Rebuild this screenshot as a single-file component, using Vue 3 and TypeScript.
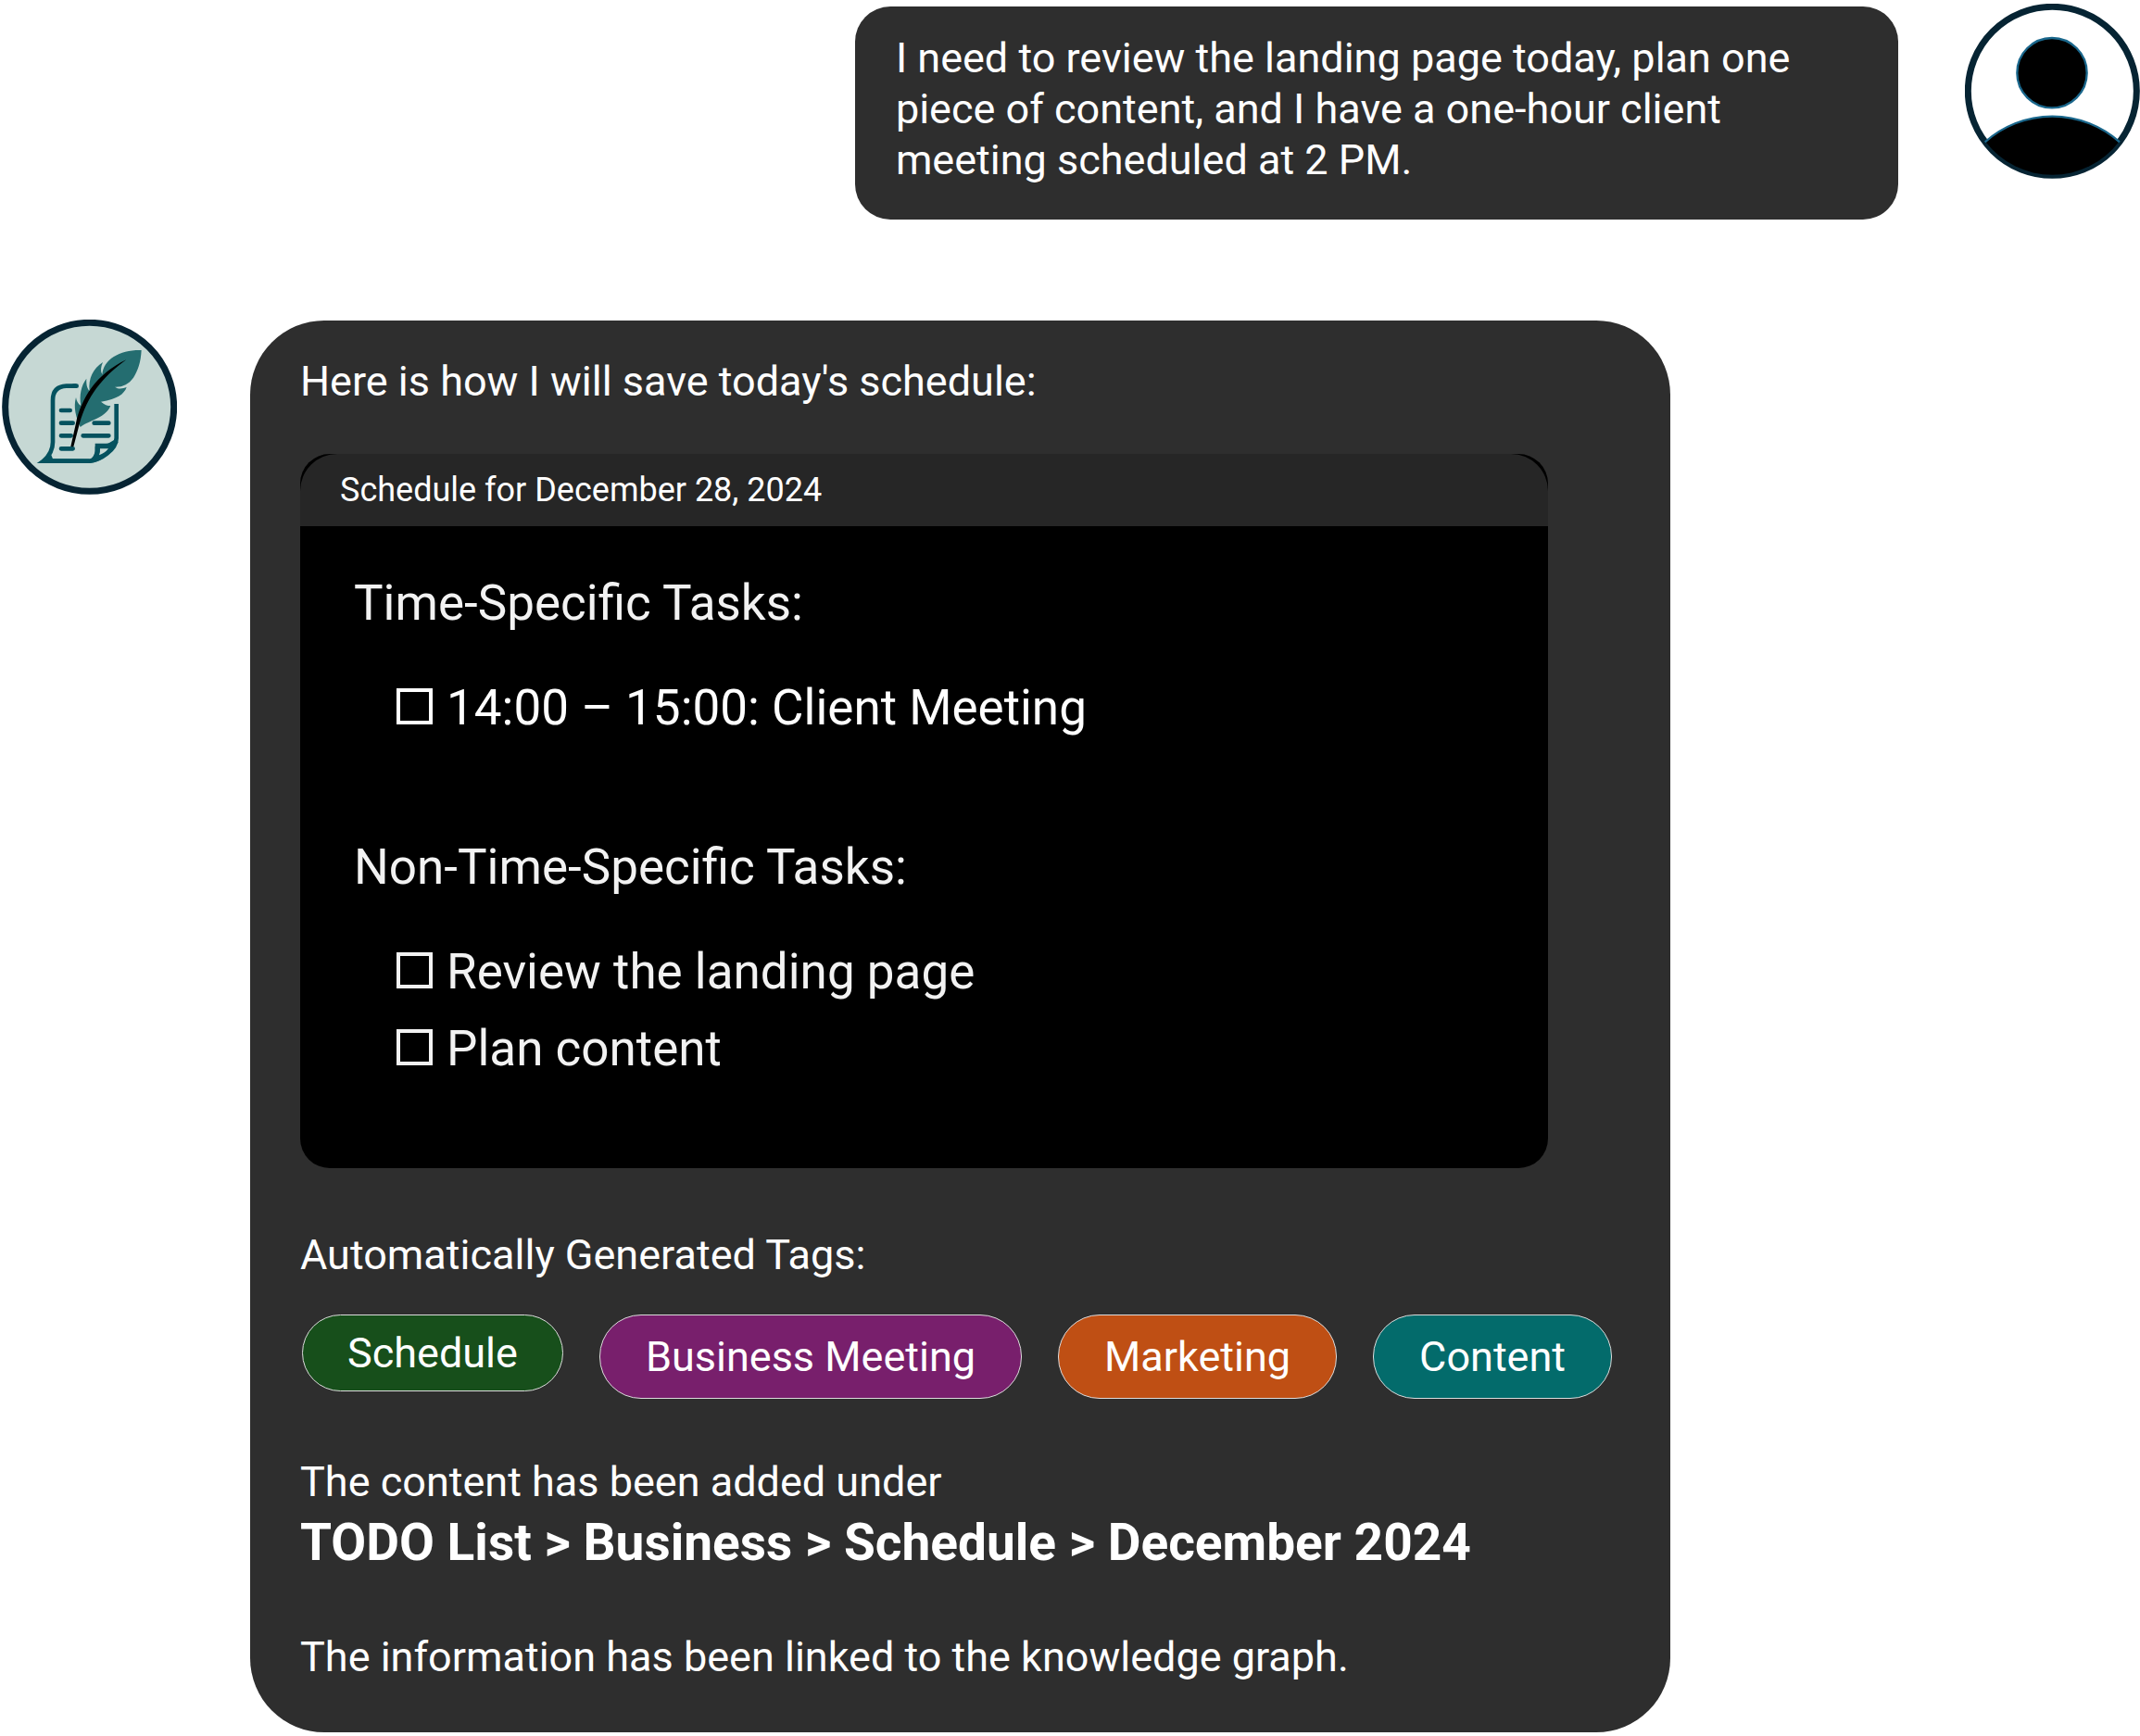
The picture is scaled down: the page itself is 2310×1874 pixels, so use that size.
<script setup lang="ts">
import { ref } from 'vue'

interface Task {
  id: string
  label: string
  done: boolean
}

interface TaskGroup {
  title: string
  timed: boolean
  tasks: Task[]
}

interface Tag {
  name: string
  tone: string
}

const request =
  'I need to review the landing page today, plan one piece of content, and I have a one-hour client meeting scheduled at 2 PM.'

const groups = ref<TaskGroup[]>([
  {
    title: 'Time-Specific Tasks:',
    timed: true,
    tasks: [{ id: 'client-meeting', label: '14:00 – 15:00: Client Meeting', done: false }],
  },
  {
    title: 'Non-Time-Specific Tasks:',
    timed: false,
    tasks: [
      { id: 'landing-page', label: 'Review the landing page', done: false },
      { id: 'plan-content', label: 'Plan content', done: false },
    ],
  },
])

const tags: Tag[] = [
  { name: 'Schedule', tone: 'green' },
  { name: 'Business Meeting', tone: 'purple' },
  { name: 'Marketing', tone: 'orange' },
  { name: 'Content', tone: 'teal' },
]

const path = ['TODO List', 'Business', 'Schedule', 'December 2024'].join(' > ')
</script>

<template>
  <main class="chat">
    <section class="row row-user">
      <p class="bubble bubble-user">{{ request }}</p>
      <svg class="avatar" viewBox="93 13 567 567" role="img" aria-label="User">
        <circle cx="376" cy="296" r="273" fill="#fff" stroke="#062433" stroke-width="21" />
        <circle cx="375" cy="237" r="113" fill="#000" stroke="#1a678c" stroke-width="7" />
        <path d="M160 460A327 327 0 0 1 592 460A271 271 0 0 1 160 460Z" fill="#000" />
        <path d="M158 461A327 327 0 0 1 594 461" fill="none" stroke="#1a678c" stroke-width="7" />
      </svg>
    </section>

    <section class="row row-bot">
      <svg class="avatar" viewBox="7 43 567 567" role="img" aria-label="Assistant">
        <circle cx="291" cy="326" r="273" fill="#c6d8d4" stroke="#062433" stroke-width="21" />
        <g fill="none" stroke="#05525f" stroke-width="14">
          <path d="M248 258H216Q172 260 172 304V440Q172 475 142 501H292C325 498 378 465 378 426V316" />
          <path d="M378 436Q368 451 344 451H316V468Q314 488 298 500" />
          <g stroke-linecap="round">
            <path d="M199 337H228M199 378H237M306 378H353M199 419H231M270 419H353M199 461H237" />
            <path d="M240 258H249" />
          </g>
        </g>
        <path d="M120 508Q146 494 162 470L172 494L290 495V508Z" fill="#05525f" />
        <path d="M316 445H350L384 425Q380 456 345 484Q320 506 290 508Q312 490 309 455Z" fill="#05525f" />
        <path d="M325 461H352Q340 476 322 482Q326 473 325 461Z" fill="#c6d8d4" />
        <path
          d="M459 142C457 180 448 208 433 231C418 252 398 262 373 261C386 270 400 266 411 262C403 284 382 300 328 309C339 319 349 322 359 322C351 342 333 357 300 370C282 378 270 384 261 391C247 360 238 326 247 295C249 306 253 316 263 322C257 288 264 256 281 234C280 251 282 265 291 274C286 234 303 201 334 181C327 197 326 210 332 221C336 170 392 140 459 142Z"
          fill="#246d70"
        />
        <path d="M410 173C328 232 284 294 259 378L239 455L230 454L247 378C263 302 310 220 410 173Z" fill="#000" />
      </svg>

      <article class="bubble bubble-bot">
        <p class="text">Here is how I will save today's schedule:</p>

        <section class="card">
          <h2 class="card-head">Schedule for December 28, 2024</h2>
          <div class="card-body">
            <section v-for="group in groups" :key="group.title" class="group">
              <h3 class="group-title">{{ group.title }}</h3>
              <ul class="tasks" :class="{ timed: group.timed }">
                <li v-for="task in group.tasks" :key="task.id" class="task">
                  <input :id="task.id" v-model="task.done" class="box" type="checkbox" />
                  <label :for="task.id">{{ task.label }}</label>
                </li>
              </ul>
            </section>
          </div>
        </section>

        <p class="text">Automatically Generated Tags:</p>
        <ul class="tags">
          <li v-for="tag in tags" :key="tag.name" class="tag" :class="tag.tone">{{ tag.name }}</li>
        </ul>

        <p class="text">The content has been added under</p>
        <p class="path">{{ path }}</p>
        <p class="text">The information has been linked to the knowledge graph.</p>
      </article>
    </section>
  </main>
</template>

<style>
body {
  margin: 0;
  background: #fff;
}
</style>

<style scoped>
.chat {
  display: flex;
  flex-direction: column;
  gap: 108px;
  padding: 4px 0;
  font-family: Roboto, "Liberation Sans", sans-serif;
  font-size: 45px;
  line-height: 55px;
  color: #fff;
}

p,
h2,
h3,
ul {
  margin: 0;
  padding: 0;
  font-weight: 400;
  list-style: none;
}

.row {
  display: flex;
  align-items: flex-start;
}

.row-user {
  justify-content: flex-end;
  gap: 72px;
}

.row-bot {
  gap: 79px;
  padding-left: 2px;
}

.avatar {
  flex: none;
  width: 189px;
  height: 189px;
}

.bubble {
  box-sizing: border-box;
  background: #2e2e2e;
}

.bubble-user {
  width: 48.75%;
  margin-top: 3px;
  padding: 28px 80px 37px 44px;
  border-radius: 38px;
}

.bubble-bot {
  width: 66.4%;
  margin-top: 1px;
  padding: 38px 54px 54px;
  border-radius: 80px;
}

.card {
  margin: 51px 78px 66px 0;
  border-radius: 32px;
  background: #000;
}

.card-head {
  padding: 0 43px;
  border-radius: 40px 40px 0 0;
  background: #262626;
  font-size: 36px;
  line-height: 78px;
}

.card-body {
  display: flex;
  flex-direction: column;
  gap: 112px;
  padding: 53px 58px 99px;
  font-size: 53px;
  line-height: 60px;
  color: #f2f2f2;
}

.group-title {
  margin-bottom: 53px;
  font-size: 53px;
}

.tasks {
  display: flex;
  flex-direction: column;
  gap: 23px;
  padding-left: 46px;
}

.timed {
  color: #fff;
}

.task {
  display: flex;
  align-items: baseline;
  gap: 15px;
}

.box {
  box-sizing: border-box;
  flex: none;
  width: 39px;
  height: 39px;
  margin: 0;
  border: 4px solid currentColor;
  color: inherit;
  appearance: none;
}

.box:checked {
  background: currentColor;
}

.tags {
  display: flex;
  align-items: flex-start;
  gap: 39px;
  margin: 37px 0 62px;
  padding-left: 2px;
}

.tag {
  box-sizing: border-box;
  padding: 17px 49px;
  border: 1px solid #dcdcdc;
  border-radius: 45px;
  white-space: nowrap;
}

.green {
  padding: 13px 48px;
  background: #174f1b;
}

.purple {
  background: #781f6c;
}

.orange {
  background: #bf4f14;
}

.teal {
  background: #036b6b;
}

.path {
  margin: 8px 0 66px;
  font-size: 55px;
  font-weight: 700;
  line-height: 60px;
}
</style>
